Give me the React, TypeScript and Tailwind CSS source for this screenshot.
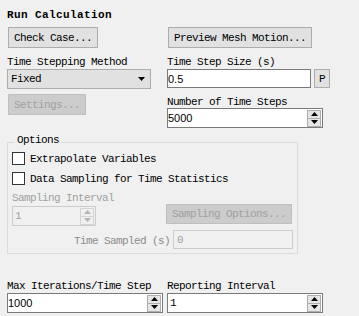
import type { ReactNode } from "react";

function Btn({
  children,
  className = "",
  disabled,
}: {
  children: ReactNode;
  className?: string;
  disabled?: boolean;
}) {
  return (
    <button
      className={`flex items-center border pl-[5px] text-left ${
        disabled
          ? "border-[#bfbfbf] bg-[#cccccc] text-[#a0a0a0]"
          : "border-[#adadad] bg-[#e1e1e1] text-black"
      } ${className}`}
    >
      {children}
    </button>
  );
}

function Spinner({ disabled }: { disabled?: boolean }) {
  const fill = disabled ? "#b4b4b4" : "#000";
  return (
    <div
      className={`ml-auto mr-[1px] flex h-[17px] w-[14px] flex-col border ${
        disabled ? "border-[#d4d4d4] bg-[#f0f0f0]" : "border-[#adadad] bg-[#e5e5e5]"
      }`}
    >
      <div
        className={`flex flex-1 items-center justify-center border-b ${
          disabled ? "border-[#d4d4d4]" : "border-[#adadad]"
        }`}
      >
        <svg width="7" height="4" viewBox="0 0 7 4">
          <path d="M3.5 0L7 4H0z" fill={fill} />
        </svg>
      </div>
      <div className="flex flex-1 items-center justify-center">
        <svg width="7" height="4" viewBox="0 0 7 4">
          <path d="M0 0h7L3.5 4z" fill={fill} />
        </svg>
      </div>
    </div>
  );
}

function Check({ label }: { label: string }) {
  return (
    <div className="flex h-[13px] items-center">
      <div className="h-[13px] w-[13px] border border-[#333333] bg-white" />
      <span className="ml-[5px]">{label}</span>
    </div>
  );
}

const sans = "font-['Liberation_Sans',Arial,sans-serif] tracking-normal";

export default function App() {
  return (
    <div className="h-[316px] w-[359px] overflow-hidden bg-[#f0f0f0] px-[7px] font-['Liberation_Mono',monospace] text-[11px] leading-[12px] tracking-[-0.6px] text-black">
      <div className="h-[12px] mt-[9px] font-bold tracking-[0.4px]">Run Calculation</div>

      <div className="mt-[6px] grid grid-cols-[160px_1fr]">
        <Btn className="ml-[1px] h-[21px] w-[90px]">Check Case...</Btn>
        <Btn className="ml-[1px] h-[21px] w-[144px]">Preview Mesh Motion...</Btn>
      </div>

      <div className="mt-[8px] grid h-[12px] grid-cols-[160px_1fr]">
        <div>Time Stepping Method</div>
        <div>Time Step Size (s)</div>
      </div>

      <div className="mt-[1px] grid grid-cols-[160px_1fr]">
        <div className="flex h-[20px] w-[144px] items-center justify-between border border-[#adadad] bg-[#e1e1e1] pl-[3px] pr-[5px]">
          <span>Fixed</span>
          <svg width="7" height="4" viewBox="0 0 7 4">
            <path d="M0 0h7L3.5 4z" fill="#000" />
          </svg>
        </div>
        <div className="flex items-start gap-[3px]">
          <div className={`flex h-[19px] w-[144px] items-center border border-[#7a7a7a] bg-white ${sans}`}>
            0.5
          </div>
          <div className="flex h-[19px] w-[16px] items-center justify-center border border-[#adadad] bg-[#e1e1e1]">
            P
          </div>
        </div>
      </div>

      <div className="grid grid-cols-[160px_1fr]">
        <div>
          <Btn disabled className="ml-[1px] mt-[5px] h-[21px] w-[78px]">
            Settings...
          </Btn>
        </div>
        <div className="pt-[7px]">
          <div className="h-[12px]">Number of Time Steps</div>
          <div className={`flex h-[20px] w-[156px] items-center border border-[#7a7a7a] bg-white ${sans}`}>
            <span>5000</span>
            <Spinner />
          </div>
        </div>
      </div>

      <fieldset className="mt-[6px] w-[291px] border border-[#dcdcdc] pb-[4px] pl-[4px] pr-[4px]">
        <legend className="ml-[2px] h-[16px] px-[3px] leading-[12px]">Options</legend>
        <div className="mt-[2px]">
          <Check label="Extrapolate Variables" />
        </div>
        <div className="mt-[7px]">
          <Check label="Data Sampling for Time Statistics" />
        </div>
        <div className="mt-[8px] h-[11px] leading-[11px] text-[#a0a0a0]">Sampling Interval</div>
        <div className="flex items-start">
          <div className="mt-[2px] flex h-[20px] w-[84px] items-center border border-[#cccccc] bg-[#f0f0f0] pl-[2px] text-[#a0a0a0]">
            <span>1</span>
            <Spinner disabled />
          </div>
          <Btn disabled className="ml-[70px] h-[20px] w-[126px]">
            Sampling Options...
          </Btn>
        </div>
        <div className="mt-[4px] flex h-[19px] items-center justify-end gap-[3px]">
          <span className="mt-[3px] text-[#8c8c8c]">Time Sampled (s)</span>
          <div className="flex h-[19px] w-[120px] items-center border border-[#cccccc] bg-[#f0f0f0] pl-[3px] text-[#a0a0a0]">
            0
          </div>
        </div>
      </fieldset>

      <div className="mt-[26px] grid h-[12px] grid-cols-[160px_1fr]">
        <div>Max Iterations/Time Step</div>
        <div>Reporting Interval</div>
      </div>

      <div className="mt-[1px] grid grid-cols-[160px_1fr]">
        <div className={`flex h-[20px] w-[156px] items-center border border-[#7a7a7a] bg-white ${sans}`}>
          <span>1000</span>
          <Spinner />
        </div>
        <div className="flex h-[20px] w-[156px] items-center border border-[#7a7a7a] bg-white pl-[2px]">
          <span>1</span>
          <Spinner />
        </div>
      </div>
    </div>
  );
}
